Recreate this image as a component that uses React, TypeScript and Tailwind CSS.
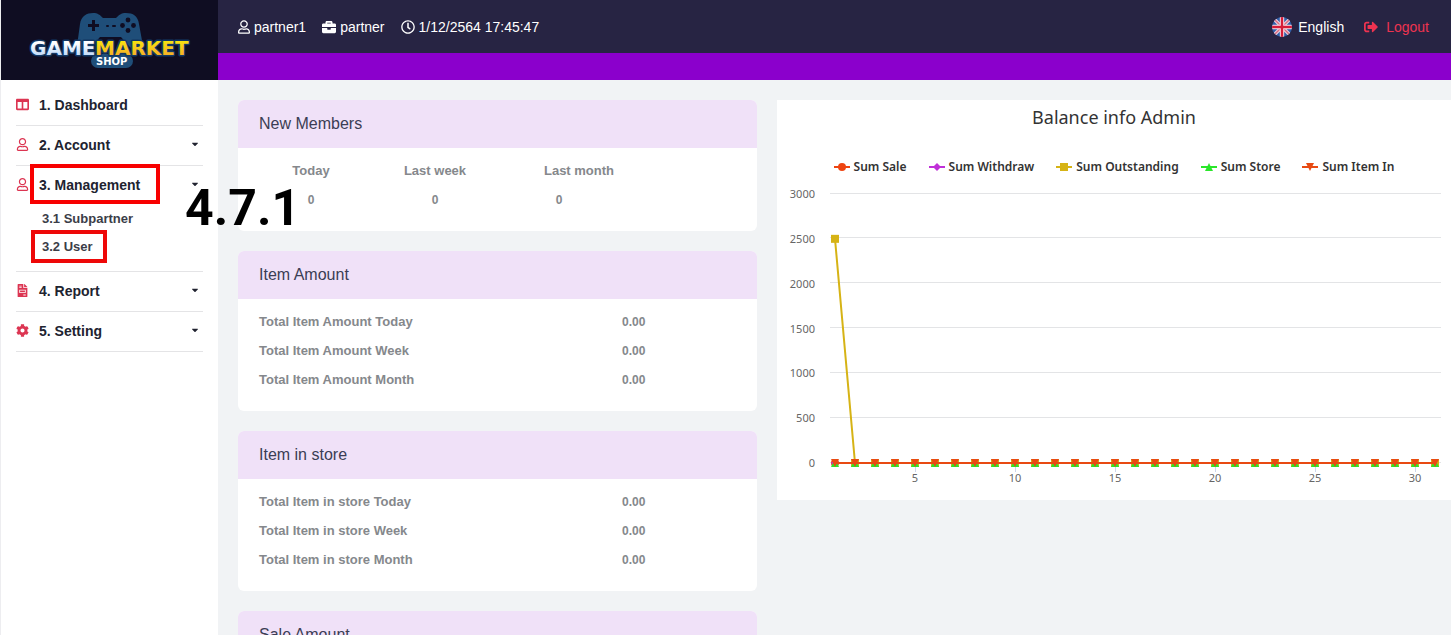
import type { ReactNode } from 'react';
import {
  FaBriefcase,
  FaCaretDown,
  FaCog,
  FaColumns,
  FaFileInvoice,
  FaRegClock,
  FaRegUser,
  FaSignOutAlt,
} from 'react-icons/fa';

function Logo() {
  return (
    <svg viewBox="0 0 164 60" className="h-15 w-41" role="img" aria-label="Game Market Shop">
      <defs>
        <linearGradient id="silver" x1="0" y1="0" x2="0" y2="1">
          <stop offset="0.3" stopColor="#ffffff" />
          <stop offset="1" stopColor="#a9cdf8" />
        </linearGradient>
        <linearGradient id="gold" x1="0" y1="0" x2="0" y2="1">
          <stop offset="0.2" stopColor="#f8e410" />
          <stop offset="1" stopColor="#f59f2c" />
        </linearGradient>
      </defs>
      <path
        d="M49 36 L52 14 C53 6 59 3 65 3 C70 3 72 5 75 8 H88 C91 5 93 3 98 3 C105 3 110 6 111 14 L115 36 C115 42 105 42 100 35 L93 27 H72 L65 35 C59 42 49 42 49 36 Z"
        fill="#1f4e79"
      />
      <path d="M64 10 h3 v4 h4 v3 h-4 v4 h-3 v-4 h-4 v-3 h4 Z" fill="#0f0d22" />
      <rect x="78" y="15" width="3" height="2" rx="1" fill="#0f0d22" />
      <rect x="84" y="15" width="4" height="2" rx="1" fill="#0f0d22" />
      <circle cx="100" cy="10" r="2.4" fill="#0f0d22" />
      <circle cx="100" cy="20.5" r="2.4" fill="#0f0d22" />
      <circle cx="94.5" cy="15.5" r="2.4" fill="#0f0d22" />
      <circle cx="105.5" cy="15.5" r="2.4" fill="#0f0d22" />
      <rect x="63" y="44" width="42" height="14" rx="7" fill="#1f4e79" />
      <g
        fontFamily="'DejaVu Sans', sans-serif"
        fontWeight="700"
        fontSize="20"
        stroke="#123763"
        strokeWidth="3"
        strokeLinejoin="round"
        paintOrder="stroke"
      >
        <text x="2" y="45" fill="url(#silver)">
          GAME
        </text>
        <text x="67" y="45" fill="url(#gold)">
          MARKET
        </text>
      </g>
      <text x="68" y="55" fontFamily="'DejaVu Sans', sans-serif" fontWeight="700" fontSize="10" fill="#ffffff">
        SHOP
      </text>
    </svg>
  );
}

function Flag() {
  return (
    <svg viewBox="0 0 20 20" className="size-5" aria-hidden="true">
      <clipPath id="round">
        <circle cx="10" cy="10" r="10" />
      </clipPath>
      <g clipPath="url(#round)">
        <rect width="20" height="20" fill="#2f5ea8" />
        <path d="M0 0 L20 20 M20 0 L0 20" stroke="#e9cfdc" strokeWidth="3.6" />
        <path d="M0 0 L20 20 M20 0 L0 20" stroke="#d9667c" strokeWidth="1.3" />
        <path d="M10 0 V20 M0 10 H20" stroke="#f4e4ec" strokeWidth="4.4" />
        <path d="M10 0 V20 M0 10 H20" stroke="#d61c38" strokeWidth="2.4" />
      </g>
    </svg>
  );
}

function MenuLink({
  icon,
  label,
  expandable,
  marked,
}: {
  icon: ReactNode;
  label: string;
  expandable?: boolean;
  marked?: boolean;
}) {
  return (
    <button
      type="button"
      className="flex h-[39px] w-full items-center pb-[2px] text-left text-sm font-bold text-[#212330]"
    >
      <span className="w-[23px] text-[13px] text-[#dc3552]">{icon}</span>
      <span className="relative">
        {label}
        {marked && (
          <span className="absolute -top-[11px] -right-5 -bottom-[9px] -left-[9px] border-4 border-[#f80000]" />
        )}
      </span>
      {expandable && <FaCaretDown className="mr-[3px] mb-px ml-auto size-[10px]" />}
    </button>
  );
}

function Sidebar() {
  return (
    <aside className="flex w-[218px] shrink-0 flex-col border-l border-[#ededf0] bg-white">
      <div className="flex h-20 items-center justify-center bg-[#0f0d22]">
        <Logo />
      </div>
      <nav className="px-[15px] pt-[6px]">
        <ul>
          <li className="border-b border-[#e4e4e6]">
            <MenuLink icon={<FaColumns />} label="1. Dashboard" />
          </li>
          <li className="border-b border-[#e4e4e6]">
            <MenuLink icon={<FaRegUser />} label="2. Account" expandable />
          </li>
          <li className="border-b border-[#e4e4e6] pb-[10px]">
            <MenuLink icon={<FaRegUser />} label="3. Management" expandable marked />
            <ul className="pl-[26px] text-[13px] leading-7 font-bold text-[#3b3d48]">
              <li>
                <a href="#subpartner">3.1 Subpartner</a>
              </li>
              <li>
                <a href="#user" className="relative">
                  3.2 User
                  <span className="absolute -top-[9px] -right-[14px] -bottom-[9px] -left-[11px] border-4 border-[#ee0808]" />
                </a>
              </li>
            </ul>
          </li>
          <li className="border-b border-[#e4e4e6]">
            <MenuLink icon={<FaFileInvoice />} label="4. Report" expandable />
          </li>
          <li className="border-b border-[#e4e4e6]">
            <MenuLink icon={<FaCog />} label="5. Setting" expandable />
          </li>
        </ul>
      </nav>
    </aside>
  );
}

function TopBar() {
  return (
    <header>
      <div className="flex h-[53px] items-center justify-between bg-[#272443] pr-[22px] pl-5 text-sm text-white">
        <div className="flex items-center gap-4">
          <span className="flex items-center gap-1">
            <FaRegUser className="w-3" /> partner1
          </span>
          <span className="flex items-center gap-1">
            <FaBriefcase /> partner
          </span>
          <span className="flex items-center gap-1">
            <FaRegClock /> 1/12/2564 17:45:47
          </span>
        </div>
        <div className="flex items-center gap-5">
          <button type="button" className="flex items-center gap-[6px]">
            <Flag /> English
          </button>
          <a href="#logout" className="flex items-center gap-2 text-[#ee3350]">
            <FaSignOutAlt /> Logout
          </a>
        </div>
      </div>
      <div className="h-[27px] bg-[#8b00cc]" />
    </header>
  );
}

function Card({ title, children }: { title: string; children: ReactNode }) {
  return (
    <section className="overflow-hidden rounded-md bg-white">
      <h2 className="bg-[#f0e1f8] px-[21px] text-base leading-[48px] text-[#3b3d54]">{title}</h2>
      {children}
    </section>
  );
}

function TotalsCard({ title, name }: { title: string; name: string }) {
  return (
    <Card title={title}>
      <table className="mt-2 mb-[17px] w-full text-[13px] font-bold text-[#85888c]">
        <tbody>
          {['Today', 'Week', 'Month'].map((period) => (
            <tr key={period} className="h-[29px]">
              <th scope="row" className="w-[74%] pl-[21px] text-left font-bold">
                Total {name} {period}
              </th>
              <td className="text-xs">0.00</td>
            </tr>
          ))}
        </tbody>
      </table>
    </Card>
  );
}

function Members() {
  return (
    <Card title="New Members">
      <table className="mt-2 mb-[17px] ml-[10px] w-[434px] table-fixed text-center text-[13px] font-bold text-[#85888c]">
        <thead>
          <tr className="h-[29px]">
            <th scope="col" className="w-[126px]">
              Today
            </th>
            <th scope="col" className="w-[122px]">
              Last week
            </th>
            <th scope="col" className="pr-5">
              Last month
            </th>
          </tr>
        </thead>
        <tbody>
          <tr className="h-[29px] text-xs">
            <td>0</td>
            <td>0</td>
            <td className="pr-15">0</td>
          </tr>
        </tbody>
      </table>
    </Card>
  );
}

type Shape = 'circle' | 'diamond' | 'square' | 'up' | 'down';

function Marker({ shape, x, y, color }: { shape: Shape; x: number; y: number; color: string }) {
  const paths: Record<Shape, string> = {
    circle: 'M-4 0 a4 4 0 1 0 8 0 a4 4 0 1 0 -8 0 Z',
    diamond: 'M0 -4 L4 0 L0 4 L-4 0 Z',
    square: 'M-4 -4 H4 V4 H-4 Z',
    up: 'M0 -4 L4 4 H-4 Z',
    down: 'M-4 -4 H4 L0 4 Z',
  };
  return <path d={paths[shape]} transform={`translate(${x} ${y})`} fill={color} />;
}

const series: { name: string; shape: Shape; color: string; first: number }[] = [
  { name: 'Sum Sale', shape: 'circle', color: '#ee4411', first: 0 },
  { name: 'Sum Withdraw', shape: 'diamond', color: '#c030d8', first: 0 },
  { name: 'Sum Outstanding', shape: 'square', color: '#d6b315', first: 2500 },
  { name: 'Sum Store', shape: 'up', color: '#2ae62a', first: 0 },
  { name: 'Sum Item In', shape: 'down', color: '#e84a12', first: 0 },
];

const days = Array.from({ length: 31 }, (_, i) => i + 1);
const dayX = (day: number) => 38 + day * 20;
const valueY = (value: number) => 284 - (value * 269) / 3000;

function BalanceChart() {
  return (
    <section className="flex flex-col bg-white pb-3">
      <h2 className="pt-[3px] text-center font-['Noto_Sans','Open_Sans',sans-serif] text-lg leading-7 text-[#333333]">
        Balance info Admin
      </h2>
      <ul className="mt-6 flex h-6 items-center justify-center gap-[22px] font-['Noto_Sans','Open_Sans',sans-serif] text-xs font-semibold text-[#333333]">
        {series.map((s) => (
          <li key={s.name} className="flex items-center gap-1">
            <svg viewBox="-8 -5 16 10" className="h-[10px] w-4" aria-hidden="true">
              <path d="M-8 0 H8" stroke={s.color} strokeWidth="2" />
              <Marker shape={s.shape} x={0} y={0} color={s.color} />
            </svg>
            {s.name}
          </li>
        ))}
      </ul>
      <svg
        viewBox="0 0 674 309"
        className="w-full font-['Noto_Sans','Open_Sans',sans-serif]"
        role="img"
        aria-label="Balance per day"
      >
        {[0, 500, 1000, 1500, 2000, 2500, 3000].map((v) => (
          <g key={v}>
            <path d={`M53 ${Math.floor(valueY(v)) - 0.5} H664`} stroke="#e3e4e6" />
            <text x="38" y={valueY(v) + 4} textAnchor="end" fontSize="11" fill="#666666">
              {v}
            </text>
          </g>
        ))}
        {[5, 10, 15, 20, 25, 30].map((d) => (
          <g key={d}>
            <path d={`M${dayX(d) + 0.5} 284 V293`} stroke="#ccd6eb" />
            <text x={dayX(d)} y="303" textAnchor="middle" fontSize="11" fill="#666666">
              {d}
            </text>
          </g>
        ))}
        {series.map((s) => (
          <g key={s.name}>
            <polyline
              points={days.map((d) => `${dayX(d)},${valueY(d === 1 ? s.first : 0)}`).join(' ')}
              fill="none"
              stroke={s.color}
              strokeWidth="2"
            />
            {days.map((d) => (
              <Marker key={d} shape={s.shape} x={dayX(d)} y={valueY(d === 1 ? s.first : 0)} color={s.color} />
            ))}
          </g>
        ))}
      </svg>
    </section>
  );
}

export default function App() {
  return (
    <div className="relative flex h-screen overflow-hidden bg-[#f1f3f5] font-['Liberation_Sans',Arial,sans-serif]">
      <Sidebar />
      <div className="min-w-0 flex-1">
        <TopBar />
        <main className="grid grid-cols-[519fr_674fr] items-start gap-5 pt-5 pl-5">
          <div className="flex flex-col gap-5">
            <Members />
            <TotalsCard title="Item Amount" name="Item Amount" />
            <TotalsCard title="Item in store" name="Item in store" />
            <TotalsCard title="Sale Amount" name="Sale Amount" />
          </div>
          <BalanceChart />
        </main>
      </div>
      <span className="absolute top-[180px] left-[185px] font-[Roboto,sans-serif] text-[50px] leading-14 font-bold text-black">
        4.7.1
      </span>
    </div>
  );
}
